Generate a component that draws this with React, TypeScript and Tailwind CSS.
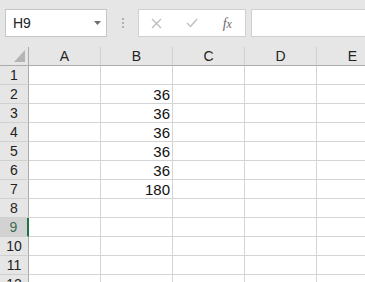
import React from "react";

const cols = ["A", "B", "C", "D", "E"];
const data: Record<number, string> = { 2: "36", 3: "36", 4: "36", 5: "36", 6: "36", 7: "180" };

export default function App() {
  const rows = Array.from({ length: 12 }, (_, i) => i + 1);
  return (
    <div
      className="w-[365px] h-[282px] overflow-hidden bg-white"
      style={{ fontFamily: '"Liberation Sans", Arial, sans-serif' }}
    >
      {/* formula bar area */}
      <div className="h-[47px] bg-[#e6e6e6] flex items-start pt-[9px] pl-[5px]">
        <div className="w-[102px] h-[28px] bg-white border border-[#c6c6c6] flex items-center justify-between pl-[7px] pr-[5px]">
          <span className="text-[14px] text-[#222]">H9</span>
          <svg width="7" height="4" viewBox="0 0 7 4">
            <path d="M0 0 L7 0 L3.5 4 Z" fill="#6e6e6e" />
          </svg>
        </div>
        <div className="w-[31px] h-[28px] flex flex-col items-center justify-center gap-[2px]">
          <div className="w-[2px] h-[2px] bg-[#b0b0b0]" />
          <div className="w-[2px] h-[2px] bg-[#b0b0b0]" />
          <div className="w-[2px] h-[2px] bg-[#b0b0b0]" />
        </div>
        <div className="w-[108px] h-[28px] bg-white border border-[#d0d0d0] flex items-center">
          <div className="w-[36px] flex justify-center">
            <svg width="11" height="11" viewBox="0 0 11 11">
              <path d="M1 1 L10 10 M10 1 L1 10" stroke="#bdbdbd" strokeWidth="1.3" />
            </svg>
          </div>
          <div className="w-[36px] flex justify-center">
            <svg width="12" height="10" viewBox="0 0 12 10">
              <path d="M1 5 L4.5 8.5 L11 1" stroke="#bdbdbd" strokeWidth="1.3" fill="none" />
            </svg>
          </div>
          <div className="w-[36px] flex justify-center">
            <span
              className="text-[14px] italic text-[#6a6a6a]"
              style={{ fontFamily: '"Liberation Serif", "Times New Roman", serif' }}
            >
              <span>f</span>
              <span className="text-[12px]">x</span>
            </span>
          </div>
        </div>
        <div className="w-[5px]" />
        <div className="flex-1 h-[28px] bg-white border border-[#d0d0d0] border-r-0" />
      </div>

      {/* column header */}
      <div className="flex h-[19px]">
        <div className="w-[29px] shrink-0 h-[19px] bg-[#e6e6e6] border-r border-b border-[#ababab] relative">
          <svg className="absolute left-[14px] top-[3px]" width="11" height="12" viewBox="0 0 11 12">
            <path d="M11 0 L11 12 L0 12 Z" fill="#b4b4b4" />
          </svg>
        </div>
        {cols.map((c) => (
          <div
            key={c}
            className="w-[72px] shrink-0 h-[19px] bg-[#e6e6e6] border-b border-b-[#ababab] border-r border-r-[#d0d0d0] flex items-center justify-center text-[14px] text-[#222] leading-none"
          >
            {c}
          </div>
        ))}
      </div>

      {rows.map((r) => {
        const sel = r === 9;
        return (
          <div key={r} className="flex h-[19px]">
            <div
              className={
                sel
                  ? "w-[29px] shrink-0 h-[19px] bg-[#d2d2d2] border-b border-b-[#d0d0d0] border-r-2 border-r-[#217346] flex items-center justify-center text-[14px] text-[#3b6b57] leading-none"
                  : "w-[29px] shrink-0 h-[19px] bg-[#e6e6e6] border-b border-b-[#d0d0d0] border-r border-r-[#ababab] flex items-center justify-center text-[14px] text-[#222] leading-none"
              }
            >
              {r}
            </div>
            {cols.map((c) => (
              <div
                key={c}
                className="w-[72px] shrink-0 h-[19px] border-r border-b border-[#d4d4d4] flex items-center justify-end pr-[2px] text-[15px] text-[#111] leading-none"
              >
                {c === "B" ? data[r] ?? "" : ""}
              </div>
            ))}
          </div>
        );
      })}
    </div>
  );
}
